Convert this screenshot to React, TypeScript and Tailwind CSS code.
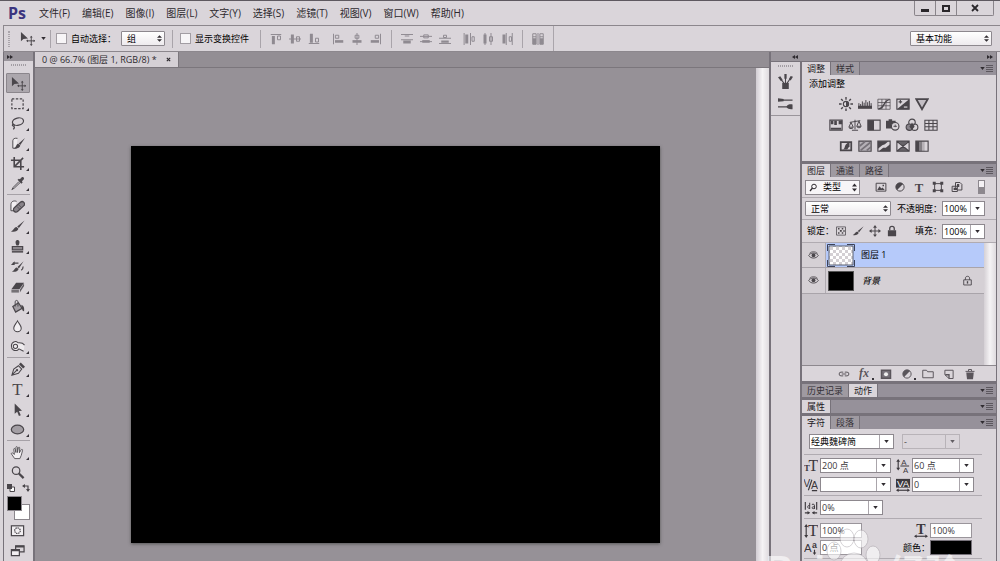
import type { ReactNode } from 'react'
import clsx from 'clsx'

interface GlyphProps {
  children:   ReactNode
  className?: string
}

// 16x16 drawing, stroked with the current colour
function Glyph({ children, className }: GlyphProps) {
  return (
    <svg
      viewBox="0 0 16 16"
      fill="none"
      stroke="currentColor"
      strokeWidth="1.3"
      aria-hidden="true"
      className={clsx('shrink-0', className ?? 'size-[15px]')}
    >
      {children}
    </svg>
  )
}

const solid = { fill: 'currentColor', stroke: 'none' }
const letter = { ...solid, fontFamily: 'Liberation Serif', fontWeight: 700 }

const glyphs = {
  move: (
    <>
      <path {...solid} d="M1 1v10l2.6-2.4L8.5 8z" />
      <path d="M12 6v9M7.5 10.500h9" strokeWidth="1" />
      <path {...solid} d="M12 5l1.500 2h-3zM12 16l1.500-2h-3zM6.500 10.500l2-1.500v3zM16 10.500l-1.500-1.500v3z" />
    </>
  ),
  marquee: <rect x="2" y="3" width="12" height="10.500" strokeDasharray="2.600 1.600" />,
  lasso: (
    <>
      <ellipse cx="8.500" cy="6" rx="6" ry="3.900" transform="rotate(-12 8.500 6)" />
      <path d="M3.500 8.500c-1 .5-1.500 2 0 2.200 1.500 0 1.500-1.500.3-1.900M4 10.800c1 1 .5 2.500-.5 3.500" />
    </>
  ),
  quickSelect: (
    <>
      <path d="M8 2.500C5 2 3 3 3 5v8h4" strokeWidth="1" fill="#eeebee" />
      <path {...solid} d="M16 2L11 9.500 9.200 8zM8.800 8.200l2.200 2c-.5 2.800-3.500 3.500-7 3 2.800-.9 2.300-4.400 4.800-5z" />
    </>
  ),
  crop: <path d="M4.500 1v10.500H15M1 4.500h10.500V15M5 11L14 2" strokeWidth="1.700" />,
  dropper: (
    <>
      <path {...solid} d="M8 4l1.500-1.200 1 .7L12.300 1.500c1.700-1 3.500.6 2.300 2.300L12.700 5.700 13.500 7 12 8.200z" />
      <path d="M9.500 6L3.500 12 2 14.500 4.500 13 10.800 7" strokeWidth="1" />
    </>
  ),
  heal: (
    <>
      <path d="M5 12.500H1V6c0-3.500 3-4.500 6-3.500" strokeWidth="1" fill="#f2eff2" />
      <rect x="2.500" y="5.800" width="14" height="5.200" rx="2.600" transform="rotate(-42 9.500 8.300)" fill="#888389" />
      <path d="M7.500 8l3 3M9.300 6.300l3 3" strokeWidth=".8" />
    </>
  ),
  brush: <path {...solid} d="M15.500 1.500L9.500 9.500 7.700 8zM7 8.600l2 1.800c-.8 3-4.500 3.600-8 2.900 2.800-.8 2.800-4 6-4.700z" />,
  stamp: (
    <>
      <path {...solid} d="M7 7C5 3.500 6 1 8 1s3 2.500 1 6z" />
      <path d="M2.500 8h11v3.500h-11z" fill="#8b868c" />
      <path d="M2 13.700h12" strokeWidth="1.600" />
    </>
  ),
  history: (
    <>
      <path {...solid} d="M14.500 2.500L9.500 10 8 8.600zM7.300 9l1.900 1.700C8.300 13.500 5 14 2 13.500c2.500-.8 2.500-3.800 5.300-4.500z" />
      <path d="M3 4.500h6M12 12c1.500-1 2-2 2-4" />
      <path {...solid} d="M1 6.500l4-4v4z" />
    </>
  ),
  eraser: (
    <>
      <path {...solid} d="M6.500 4h8.500l-5 7H1.500z" />
      <path {...solid} d="M1.500 11.500H9.500v3h-8z" opacity=".7" />
      <path {...solid} d="M10.500 11.500l4.500-7v3l-4.500 7z" opacity=".85" />
    </>
  ),
  bucket: (
    <>
      <path d="M3 8l6-4 4 6-7 4z" fill="#a29da3" />
      <path d="M5.500 8V3c0-2 3-2 3 0v5" strokeWidth="1" />
      <path {...solid} d="M12 6c3 1 3.500 4 3 7-2 0-2-2-2.500-4z" />
    </>
  ),
  drop: <path d="M8 2c1.500 3 4 5 4 7.700a4 4 0 0 1-8 0C4 7 6.500 5 8 2z" fill="#f2eff2" strokeWidth="1.100" />,
  dodge: (
    <>
      <path d="M15.500 6.500C13 3 9 4.500 8.500 4 6 1.500 1.500 3 1.500 7.500S5 13 8 12l1.500-1.500 5 2.500" strokeWidth="1.100" fill="#eeebee" />
      <circle cx="5.800" cy="7.800" r="2.300" strokeWidth="1.100" />
    </>
  ),
  pen: (
    <>
      <path d="M2 14l2-6.500L9 4l3.500 3.500L9 12zM2 14l5-5" strokeWidth="1.100" />
      <circle {...solid} cx="7.500" cy="8.700" r="1.200" />
      <path {...solid} d="M9.500 2.500L11.500 .5 16 5 14 7z" />
    </>
  ),
  type: <text {...letter} x="8" y="14" fontSize="18" textAnchor="middle" fontWeight="400">T</text>,
  arrow: <path {...solid} d="M5 1.500v11l2.700-2.200L9.500 15l2-.8-2-4.500 3.300-.3z" />,
  ellipse: <ellipse cx="8" cy="8" rx="6.600" ry="4.700" fill="#a39ea4" />,
  hand: (
    <path
      d="M5 14.500L1.500 9.500c-.3-1 .8-1.500 1.500-.8L4.700 10 4 4.500c0-1 1.300-1.100 1.500 0L6.300 8V2.500c0-1 1.500-1 1.600 0V8l1-5c.2-1 1.600-.8 1.500.2L10 8.300l2-3.300c.7-.8 1.700-.2 1.400.7L12 11l-1.500 3.500z"
      fill="#f2eff2"
      strokeWidth=".9"
    />
  ),
  zoom: (
    <>
      <circle cx="6.500" cy="6" r="4" />
      <path d="M9.500 9l5 5" strokeWidth="2.400" />
    </>
  ),
  mask: (
    <>
      <rect x="1.500" y="3" width="13" height="10.500" fill="#f2eff2" />
      <circle cx="8" cy="8.200" r="3" strokeDasharray="1.500 .8" />
    </>
  ),
  screen: (
    <>
      <path d="M6 3h9v6.500H6z" />
      <path d="M6 3.800h9" strokeWidth="2" />
      <path d="M1.500 7H10v6.500H1.500z" fill="#f2eff2" />
      <path d="M1.500 7.800H10" strokeWidth="2" />
    </>
  ),
  brushes: (
    <>
      <path {...solid} d="M4.500 9.500h7V16h-7z" />
      <path d="M8 10V3M6.500 10L3 5.500M9.500 10L13 5" strokeWidth="1.100" />
      <path {...solid} d="M6.800 0h2.400v5H6.800zM0 3.500l2.500-1 2.500 4-2 1zM11.500 5.500L13.500 2l2.500 1-2.500 4z" />
    </>
  ),
  brushPresets: (
    <>
      <path d="M1 4.500h14.500M0 11.500h12" />
      <path {...solid} d="M0 2.500l6 .8v2.400L0 6zM9 11.500c1-3 5-3 6.500-2.500v5c-2 .5-5.500 0-6.500-2.500z" />
    </>
  ),
  sun: (
    <>
      <circle cx="8" cy="8" r="3" />
      <path {...solid} d="M8 5a3 3 0 0 1 0 6z" />
      <path d="M8 0v3M8 13v3M0 8h3M13 8h3M2.400 2.400l2 2M11.600 11.600l2 2M2.400 13.600l2-2M11.600 4.400l2-2" strokeWidth="1.600" />
    </>
  ),
  levels: (
    <>
      <path {...solid} d="M0 10h16v3.500H0z" />
      <path d="M1 7v4M3 8v3M5 5v6M7 6.500v5M9 3.500v8M11 6v5M13 4.500v7M15 7v4" strokeWidth="1.100" />
    </>
  ),
  curves: (
    <>
      <path d="M1 2.500h14v11.500H1zM5.600 2.500V14M10.300 2.500V14M1 6.300h14M1 10h14" strokeWidth=".8" />
      <path d="M1.500 13.500c8 0 5-10 13-10.500" strokeWidth="1.600" />
    </>
  ),
  exposure: (
    <>
      <path d="M1 2.500h14v11.500H1z" />
      <path {...solid} d="M15 2.500V14H1z" />
      <path d="M3 5.500h4M5 3.500v4" />
      <path d="M9 11.500h4" stroke="#e5e1e5" />
    </>
  ),
  vibrance: <path d="M1.500 2.500h13L8 14z" fill="#c3bec4" strokeWidth="2" />,
  hue: (
    <>
      <path d="M1 2.500h14v11.500H1z" />
      <path {...solid} d="M2 3h3v4H2zM6 3h3v5H6zM11 3h4v4h-4zM2 11h12v2.500H2z" />
    </>
  ),
  balance: (
    <path d="M8 2v11M4.500 14h7M2 5l12-2M3.500 5L1 10.500h5zM12.500 3.500L10 9.500h5zM1 11c1 1.500 4 1.500 5 0M10 10c1 1.500 4 1.500 5 0" strokeWidth="1.100" />
  ),
  blackWhite: (
    <>
      <path d="M1 2.500h14v11.500H1z" />
      <path {...solid} d="M1 2.500h7V14H1z" />
    </>
  ),
  photo: (
    <>
      <path {...solid} d="M0 3h3V1.500h4V3h4v5L7 12H0z" />
      <circle cx="10.500" cy="9.500" r="4.300" fill="#dad5da" />
      <path d="M8.500 9.500h4M10.500 7.500v3" strokeWidth="1" />
    </>
  ),
  mixer: (
    <>
      <circle cx="8" cy="5" r="3.700" />
      <circle cx="5" cy="10.500" r="3.700" fill="#88838a" />
      <circle cx="11" cy="10.500" r="3.700" />
      <path {...solid} d="M8 5l3 5-3 3-3-3z" />
    </>
  ),
  grid: <path d="M1 2.500h14v11.500H1zM5.600 2.500V14M10.300 2.500V14M1 6.300h14M1 10h14" strokeWidth="1.200" />,
  invert: (
    <>
      <path d="M2 3.500h12V13H2z" strokeWidth="2" />
      <path {...solid} d="M4 12c4 0 1-7 8-8v5c-2 0-1 3-4 3z" />
    </>
  ),
  posterize: (
    <>
      <path d="M1 2.500h14v11.500H1z" fill="#b5b0b6" />
      <path d="M2 8l6-5M3 13L14 4M10 13l5-4" strokeWidth="2" stroke="#767178" />
    </>
  ),
  threshold: (
    <>
      <path d="M1 2.500h14v11.500H1z" />
      <path {...solid} d="M1 2.500h12L9 6 6 7l-5 4zM15 6v8H2l5-4h3z" />
    </>
  ),
  selective: (
    <>
      <path d="M1 2.500h14v11.500H1zM1 2.500L15 14M15 2.500L1 14" />
      <path {...solid} d="M1 14l7-6 7 6zM2 2.500h12L8 8z" opacity=".8" />
    </>
  ),
  gradient: (
    <>
      <path d="M1 2.500h14v11.500H1z" />
      <path {...solid} d="M1 2.500h4V14H1z" />
      <path {...solid} d="M5 2.500h3V14H5z" opacity=".6" />
      <path {...solid} d="M8 2.500h3V14H8z" opacity=".25" />
    </>
  ),
  image: (
    <>
      <path d="M1.500 3h13v10.500h-13z" />
      <path {...solid} d="M3 12l3-5 2.500 3L10 8.500l3 3.500zM10 5h2v2h-2z" />
    </>
  ),
  halfCircle: (
    <>
      <circle cx="8" cy="8" r="5.500" />
      <path {...solid} d="M12 4.100A5.500 5.500 0 1 0 4.100 12z" />
    </>
  ),
  boldType: <text {...letter} x="8" y="14" fontSize="17" textAnchor="middle">T</text>,
  shape: (
    <>
      <path d="M3.500 3.500h9v9h-9z" />
      <path {...solid} d="M1 1h4v4H1zM11 1h4v4h-4zM1 11h4v4H1zM11 11h4v4h-4z" />
    </>
  ),
  smart: (
    <>
      <path d="M6 9V2h6l2.500 2.500V12H9" />
      <path d="M1.500 7h7v7h-7z" />
      <path {...solid} d="M8 4h3v4H8zM3.500 9H8v3H3.500z" />
    </>
  ),
  checker: (
    <>
      <path d="M2 2.500h12v11H2z" strokeWidth="1" />
      <path {...solid} d="M4 4h2v2H4zM9 4h2v2H9zM6.500 6.500h2.500v2.500H6.500zM11 7h2v2h-2zM4 9.500h2v2H4zM9 9.500h2v2H9z" />
    </>
  ),
  cross: (
    <>
      <path d="M8 2v12M2 8h12" />
      <path {...solid} d="M8 0l2.600 3.500H5.400zM8 16l2.600-3.500H5.400zM0 8l3.500-2.600v5.200zM16 8l-3.500-2.600v5.200z" />
    </>
  ),
  lock: (
    <>
      <path d="M5 7V4.500c0-3.500 6-3.500 6 0V7" strokeWidth="1.700" />
      <path {...solid} d="M2.500 7h11v8h-11z" />
    </>
  ),
  lockOutline: (
    <>
      <path d="M5 7V4.500c0-3.500 6-3.500 6 0V7M2.500 7h11v7.500h-11z" />
      <path d="M8 9v3.500" strokeWidth="2" />
    </>
  ),
  eye: (
    <>
      <path d="M1 8c3-5 11-5 14 0-3 5-11 5-14 0z" />
      <circle {...solid} cx="8" cy="7.700" r="2.800" />
      <path d="M2 5c3-3.500 9-3.500 12 0" strokeWidth="1" />
    </>
  ),
  link: <path d="M7 5.500H4a2.500 2.500 0 0 0 0 5h3M9 5.500h3a2.500 2.500 0 0 1 0 5H9M5 8h6" />,
  fx: <text {...solid} x="0" y="12" fontSize="16" fontFamily="Liberation Serif" fontStyle="italic" fontWeight="700">fx</text>,
  layerMask: (
    <>
      <path d="M2 3h12v10.500H2z" strokeWidth="2" fill="#77727a" />
      <circle cx="8" cy="8.200" r="2.700" fill="#eee" stroke="none" />
    </>
  ),
  folder: <path d="M1 13V3h5l1.500 2H15v8z" />,
  newLayer: (
    <>
      <path d="M2.500 3h11v11H8L2.500 9z" />
      <path d="M3 9h5v5" strokeWidth="1.800" />
    </>
  ),
  trash: (
    <>
      <path d="M2 4.500h12M6 4V2h4v2" />
      <path {...solid} d="M3 6h10l-1 9H4z" />
    </>
  ),
  alignTop: (
    <>
      <path d="M1 2h14M10 4h4v5h-4z" />
      <path {...solid} d="M2.500 4h4v11h-4z" />
    </>
  ),
  alignMiddle: (
    <>
      <path d="M0 8h16M10 5h4v6h-4z" />
      <path {...solid} d="M2.500 2h4v12h-4z" />
    </>
  ),
  alignBottom: (
    <>
      <path d="M1 14h14M10 7h4v5h-4z" />
      <path {...solid} d="M2.500 1h4v12h-4z" />
    </>
  ),
  alignLeft: (
    <>
      <path d="M2 1v14M4.500 3H9v4H4.500z" />
      <path {...solid} d="M4 9.500h11V13H4z" />
    </>
  ),
  alignCenter: (
    <>
      <path d="M8 0v16M5.500 3h5v4h-5z" />
      <path {...solid} d="M2 9.500h12V13H2z" />
    </>
  ),
  alignRight: (
    <>
      <path d="M14 1v14M7 3h4.500v4H7z" />
      <path {...solid} d="M1 9.500h11V13H1z" />
    </>
  ),
  distTop: (
    <>
      <path d="M0 2h16M0 9h16M5 4h6" />
      <path {...solid} d="M3 10h10v4H3z" />
    </>
  ),
  distMiddle: (
    <>
      <path d="M0 4.500h16M0 11.500h16M5 2.500h6v4H5z" />
      <path {...solid} d="M3 9.500h10V13H3z" />
    </>
  ),
  distBottom: (
    <>
      <path d="M0 7h16M0 14h16M6 3h4v3H6z" />
      <path {...solid} d="M3 10h10v3H3z" />
    </>
  ),
  distLeft: (
    <>
      <path d="M1.500 0v16M10 0v16M12 5h3v6h-3z" />
      <path {...solid} d="M3 2h4v12H3z" />
    </>
  ),
  distCenter: (
    <>
      <path d="M4 0v16M12 0v16M10 5h4v6h-4z" />
      <path {...solid} d="M2 2h4v12H2z" />
    </>
  ),
  distRight: (
    <>
      <path d="M7 0v16M15 0v16M11 5h3v6h-3z" />
      <path {...solid} d="M2 2h4v12H2z" />
    </>
  ),
  autoAlign: (
    <>
      <path d="M1 1h4.500v14H1zM10.500 1H15v14h-4.500zM8 0v16M1 5h4.500M10.500 5H15" />
      <path {...solid} d="M1 7h4.500v8H1zM10.500 7H15v8h-4.500z" />
    </>
  ),
  fontSize: (
    <>
      <text {...letter} x="5" y="14" fontSize="18" fontWeight="400">T</text>
      <text {...letter} x="0" y="14" fontSize="10">T</text>
    </>
  ),
  leading: (
    <>
      <text {...solid} x="6" y="7" fontSize="9" fontFamily="Liberation Sans">A</text>
      <text {...solid} x="8" y="16" fontSize="9" fontFamily="Liberation Sans">A</text>
      <path d="M5 8h10M2.500 2v9" />
      <path {...solid} d="M2.500 0l2.200 3H.3zM2.500 13l2.200-3H.3z" />
    </>
  ),
  kerning: (
    <>
      <text {...solid} x="-1" y="10" fontSize="12" fontFamily="Liberation Sans">V</text>
      <text {...solid} x="8" y="12" fontSize="12" fontFamily="Liberation Sans">A</text>
      <path d="M9 2L5 14M9 14.500h6" />
    </>
  ),
  tracking: (
    <>
      <path {...solid} d="M0 1h16v10H0z" />
      <text x="8" y="10" fontSize="11" fontFamily="Liberation Sans" fill="#fff" stroke="none" textAnchor="middle">VA</text>
      <path d="M2 14h12" />
      <path {...solid} d="M0 14l3-2v4zM16 14l-3-2v4z" />
    </>
  ),
  tsume: (
    <>
      <path d="M1.500 1v9M14.500 1v9M1 13.500h5M10 13.500h5" />
      <path d="M6.500 2v7M6.500 5.500c-3-1.500-3 3.500 0 3M9 4c2-1 3 0 3 1.500V9M12 6.500c-4 0-3.500 3 0 2" strokeWidth="1.100" />
      <path {...solid} d="M7 13.500l-3-2v4zM9 13.500l3-2v4z" />
    </>
  ),
  vScale: (
    <>
      <text {...letter} x="4.500" y="14" fontSize="19" fontWeight="400">T</text>
      <path d="M2.500 3v10" />
      <path {...solid} d="M2.500 0l2.200 3.500H.3zM2.500 16l2.200-3.500H.3z" />
    </>
  ),
  hScale: (
    <>
      <text {...letter} x="8" y="11" fontSize="16" textAnchor="middle">T</text>
      <path d="M2 14h12" />
      <path {...solid} d="M0 14l3-2v4zM16 14l-3-2v4z" />
    </>
  ),
  baseline: (
    <>
      <text {...solid} x="0" y="12" fontSize="13" fontFamily="Liberation Sans">A</text>
      <text {...solid} x="9" y="8" fontSize="10" fontFamily="Liberation Sans" fontWeight="700">a</text>
      <path d="M12 10v5" />
      <path {...solid} d="M12 16l2-3h-4z" />
    </>
  ),
}

type GlyphName = keyof typeof glyphs

const menus = ['文件(F)', '编辑(E)', '图像(I)', '图层(L)', '文字(Y)', '选择(S)', '滤镜(T)', '视图(V)', '窗口(W)', '帮助(H)']

const alignGroups: GlyphName[][] = [
  ['alignTop', 'alignMiddle', 'alignBottom'],
  ['alignLeft', 'alignCenter', 'alignRight'],
]

const distributeGroups: GlyphName[][] = [
  ['distTop', 'distMiddle', 'distBottom'],
  ['distLeft', 'distCenter', 'distRight'],
]

const toolGroups: GlyphName[][] = [
  ['move', 'marquee', 'lasso', 'quickSelect', 'crop', 'dropper'],
  ['heal', 'brush', 'stamp', 'history', 'eraser', 'bucket', 'drop', 'dodge'],
  ['pen', 'type', 'arrow', 'ellipse'],
  ['hand', 'zoom'],
]

const adjustments: GlyphName[][] = [
  ['sun', 'levels', 'curves', 'exposure', 'vibrance'],
  ['hue', 'balance', 'blackWhite', 'photo', 'mixer', 'grid'],
  ['invert', 'posterize', 'threshold', 'selective', 'gradient'],
]

function IconButton({ name, className }: { name: GlyphName; className?: string }) {
  return (
    <button type="button" aria-label={name} className="flex shrink-0 items-center justify-center">
      <Glyph className={className}>{glyphs[name]}</Glyph>
    </button>
  )
}

function Separator() {
  return <div className="h-[18px] w-px shrink-0 bg-[#a9a4aa]" />
}

function Caret() {
  return (
    <svg viewBox="0 0 6 4" className="h-[3px] w-[5px]" aria-hidden="true">
      <path d="M0 0h6L3 4z" fill="#302c31" />
    </svg>
  )
}

interface DropdownProps {
  label:      string
  value:      string
  className?: string
}

function Dropdown({ label, value, className }: DropdownProps) {
  return (
    <div className={clsx('relative h-[15px]', className)}>
      <select
        aria-label={label}
        className="block h-full w-full appearance-none rounded-[1px] border border-[#8d888e] bg-linear-to-b from-white to-[#eeebee] pl-[5px] text-[9px] leading-[12px] text-black"
      >
        <option>{value}</option>
      </select>
      <svg viewBox="0 0 6 8" className="pointer-events-none absolute inset-y-0 right-[3px] my-auto h-[7px] w-[5px]" aria-hidden="true">
        <path d="M0 3h6L3 0zM0 5h6L3 8z" fill="#302c31" />
      </svg>
    </div>
  )
}

interface ComboProps {
  label:      string
  value:      string
  className?: string
  disabled?:  boolean
}

function Combo({ label, value, className, disabled = false }: ComboProps) {
  return (
    <div className={clsx('flex h-[15px] border', disabled ? 'border-[#aaa5ab] opacity-70' : 'border-[#8d888e] bg-white', className)}>
      <input
        aria-label={label}
        defaultValue={value}
        disabled={disabled}
        className="w-0 min-w-0 flex-1 pl-px text-[9px] leading-[13px]"
      />
      <button
        type="button"
        aria-label={`${label} ▾`}
        disabled={disabled}
        className="flex w-[14px] items-center justify-center border-l border-[#aaa5ab]"
      >
        <Caret />
      </button>
    </div>
  )
}

function TextBox({ label, value }: { label: string; value: string }) {
  return (
    <input
      aria-label={label}
      defaultValue={value}
      className="h-[15px] w-[42px] border border-[#9a959b] bg-white pl-px text-[9px] leading-[13px]"
    />
  )
}

function TabBar({ tabs, active }: { tabs: string[]; active: string }) {
  return (
    <div className="flex h-[14px] shrink-0 border-t border-[#77727a] bg-[#96919a]">
      {tabs.map((tab) => (
        <button
          key={tab}
          type="button"
          className={clsx(
            'border-r border-[#77727a] px-[5px] text-[9px] leading-[13px]',
            tab === active ? 'bg-[#dad5da] text-[#1d1a1e]' : 'bg-[#9f9aa1] text-[#343036]'
          )}
        >
          {tab}
        </button>
      ))}
      <button type="button" aria-label="menu" className="ml-auto flex items-center gap-px pr-[3px]">
        <Caret />
        <svg viewBox="0 0 7 7" className="size-[7px]" aria-hidden="true">
          <path d="M0 .5h7M0 2.500h7M0 4.500h7M0 6.500h7" stroke="#5d585f" />
        </svg>
      </button>
    </div>
  )
}

function DoubleArrow({ left = false }: { left?: boolean }) {
  return (
    <svg viewBox="0 0 6 4" className={clsx('h-[4px] w-[6px]', left && 'rotate-180')} aria-hidden="true">
      <path d="M0 0l3 2-3 2zM3 0l3 2-3 2z" fill="#2e2a2f" />
    </svg>
  )
}

function Grip() {
  return <div className="mx-auto h-[2px] w-[15px] border-y border-dotted border-[#a29da3]" />
}

function MenuBar() {
  return (
    <header className="flex h-[25px] shrink-0 items-center border-t border-[#5e5960] pr-[6px] pl-[8px]">
      <span className="w-[31px] font-['Open_Sans'] text-[16px] leading-[20px] font-bold text-[#3b347f]">Ps</span>
      <nav className="flex gap-[12px]">
        {menus.map((menu) => (
          <button key={menu} type="button" className="text-[10px] leading-[16px] whitespace-nowrap">
            {menu}
          </button>
        ))}
      </nav>
      <div className="ml-auto flex h-[15px] self-start rounded-b-[2px] border border-t-0 border-[#89848a]">
        <button type="button" aria-label="minimize" className="flex w-[21px] items-center justify-center border-r border-[#89848a]">
          <span className="mt-1 h-[3px] w-[8px] bg-[#2a272b]" />
        </button>
        <button type="button" aria-label="maximize" className="flex w-[21px] items-center justify-center border-r border-[#89848a]">
          <span className="h-[7px] w-[8px] border-2 border-[#2a272b]" />
        </button>
        <button type="button" aria-label="close" className="flex w-[36px] items-center justify-center">
          <svg viewBox="0 0 8 8" className="size-[8px]" aria-hidden="true">
            <path d="M1 1l6 6M7 1L1 7" stroke="#2a272b" strokeWidth="1.800" />
          </svg>
        </button>
      </div>
    </header>
  )
}

function CheckOption({ children }: { children: ReactNode }) {
  return (
    <label className="flex items-center gap-[4px] text-[9px] leading-[14px] whitespace-nowrap text-black">
      <input type="checkbox" className="size-[11px] appearance-none border border-[#a29da3] bg-[#f7f5f7]" />
      {children}
    </label>
  )
}

function AlignGroup({ names }: { names: GlyphName[] }) {
  return (
    <div className="flex gap-[7px] text-[#8f8a91]">
      {names.map((name) => (
        <IconButton key={name} name={name} className="size-[12px]" />
      ))}
    </div>
  )
}

function OptionsBar() {
  return (
    <div className="ml-[3px] flex h-[27px] shrink-0 items-center border-y border-l border-[#8c878d] pr-[8px] pl-[4px]">
      <div className="h-[16px] w-[2px] border-x border-dotted border-[#a9a4aa]" />
      <button type="button" aria-label="tool preset" className="ml-[10px] flex items-center gap-[6px] text-[#4a464b]">
        <Glyph>{glyphs.move}</Glyph>
        <Caret />
      </button>
      <div className="ml-[4px] flex flex-1 items-center">
        <Separator />
        <div className="ml-[5px]">
          <CheckOption>自动选择：</CheckOption>
        </div>
        <Dropdown label="自动选择" value="组" className="ml-[5px] w-[44px]" />
        <div className="ml-[7px] flex items-center gap-[7px]">
          <Separator />
          <CheckOption>显示变换控件</CheckOption>
        </div>
        <div className="ml-[11px] flex items-center gap-[9px]">
          <Separator />
          <div className="flex gap-[12px]">
            {alignGroups.map((names) => (
              <AlignGroup key={names[0]} names={names} />
            ))}
          </div>
          <Separator />
          <div className="flex gap-[12px]">
            {distributeGroups.map((names) => (
              <AlignGroup key={names[0]} names={names} />
            ))}
          </div>
          <Separator />
          <AlignGroup names={['autoAlign']} />
        </div>
        <div className="ml-[9px] h-[25px] w-px bg-[#aaa5ab]" />
        <Dropdown label="工作区" value="基本功能" className="ml-auto w-[82px]" />
      </div>
    </div>
  )
}

function Toolbar() {
  return (
    <aside className="ml-[3px] flex w-[32px] shrink-0 flex-col border-r-2 border-l border-[#77727a]">
      <div className="flex h-[9px] shrink-0 items-center bg-[#99949b] pl-[3px]">
        <DoubleArrow />
      </div>
      <div className="pt-[3px] pb-[7px]">
        <Grip />
      </div>
      {toolGroups.map((group, i) => (
        <div key={group[0]}>
          {i > 0 && <div className="mx-[3px] my-px h-px bg-[#a6a1a7]" />}
          {group.map((name) => (
            <button
              key={name}
              type="button"
              aria-label={name}
              className={clsx(
                'relative flex h-[20px] w-[24px] items-center justify-center rounded-[1px] text-[#4a464b]',
                name === 'move' ? 'ml-[2px] border border-[#8b868c] bg-[#aca7ad]' : 'ml-[1px]'
              )}
            >
              <Glyph>{glyphs[name]}</Glyph>
              {name !== 'move' && name !== 'zoom' && (
                <svg viewBox="0 0 3 3" className="absolute right-0 bottom-[2px] size-[3px]" aria-hidden="true">
                  <path d="M3 0v3H0z" fill="#38343a" />
                </svg>
              )}
            </button>
          ))}
        </div>
      ))}
      <div className="mt-[2px] flex justify-between px-[3px] text-[#4a464b]">
        <svg viewBox="0 0 8 8" className="size-[8px]" aria-hidden="true">
          <path d="M3 3h4.500v4.500H3z" fill="#fff" stroke="currentColor" />
          <path d="M0 0h5v5H0z" fill="currentColor" />
        </svg>
        <svg viewBox="0 0 8 8" className="size-[8px]" aria-hidden="true">
          <path d="M1 2h5v5" fill="none" stroke="currentColor" strokeWidth="1.200" />
          <path d="M0 2l3-2v4zM6 8L4 5h4z" fill="currentColor" />
        </svg>
      </div>
      {/* foreground over background colour */}
      <div className="relative mx-[3px] mt-[4px] h-[24px] shrink-0">
        <button type="button" aria-label="background colour" className="absolute right-0 bottom-0 size-[16px] border border-[#8b868c] bg-white" />
        <button type="button" aria-label="foreground colour" className="absolute top-0 left-0 size-[15px] border border-[#8b868c] bg-black" />
      </div>
      <div className="mt-[3px] flex flex-col items-center gap-[5px] pr-[2px] text-[#4a464b]">
        <IconButton name="mask" />
        <IconButton name="screen" />
      </div>
    </aside>
  )
}

function Workspace() {
  return (
    <main className="flex min-w-0 flex-1 flex-col bg-[#969197]">
      <div className="flex h-[16px] shrink-0 border-b border-[#7b767c] bg-[#938e94]">
        <div className="flex items-center gap-[9px] border-r border-[#7b767c] bg-[#d5d0d5] px-[7px] text-[9px] leading-[15px] whitespace-nowrap text-[#2d292e]">
          0 @ 66.7% (图层 1, RGB/8) *
          <button type="button" aria-label="close tab">
            <svg viewBox="0 0 6 6" className="size-[5px]" aria-hidden="true">
              <path d="M1 1l4 4M5 1L1 5" stroke="#2d292e" strokeWidth="1.400" />
            </svg>
          </button>
        </div>
      </div>
      <div className="flex min-h-0 flex-1">
        <div className="min-w-0 flex-1 pt-[78px]">
          <div className="mx-auto aspect-[4/3] w-11/15 bg-black shadow-[0_1px_3px_#555]" />
        </div>
        <div className="w-[13px] shrink-0 bg-linear-to-r from-[#d2cdd3] via-[#f5f3f5] to-[#dfdbdf]" />
      </div>
    </main>
  )
}

function AdjustmentsPanel() {
  return (
    <section className="shrink-0">
      <TabBar tabs={['调整', '样式']} active="调整" />
      <div className="flex h-[86px] flex-col">
        <h2 className="px-[7px] pt-px text-[9px] leading-[16px] text-black">添加调整</h2>
        <div className="flex flex-col gap-[7px] pt-[5px] pr-[31px] text-[#4a464b]">
          {adjustments.map((row) => (
            <div key={row[0]} className="flex justify-center gap-[5px]">
              {row.map((name) => (
                <IconButton key={name} name={name} className="size-[14px]" />
              ))}
            </div>
          ))}
        </div>
      </div>
    </section>
  )
}

function LayersPanel() {
  return (
    <section className="flex shrink-0 flex-col border-t-2 border-[#77727a]">
      <TabBar tabs={['图层', '通道', '路径']} active="图层" />
      <div className="flex h-[21px] items-center border-b border-[#b0abb1] pr-[11px] pl-[3px]">
        <div className="relative">
          <select
            aria-label="类型"
            className="block h-[15px] w-[55px] appearance-none border border-[#8d888e] bg-[#f7f5f7] pl-[17px] text-[9px] leading-[12px] text-black"
          >
            <option>类型</option>
          </select>
          <svg viewBox="0 0 55 15" className="pointer-events-none absolute inset-0 h-[15px] w-[55px]" aria-hidden="true">
            <path d="M47 6.500h5l-2.500-3zM47 8.500h5l-2.500 3z" fill="#302c31" />
            <circle cx="9" cy="6.500" r="2.300" fill="none" stroke="#302c31" />
            <path d="M7.500 8L5 11" stroke="#302c31" strokeWidth="1.300" />
          </svg>
        </div>
        <div className="ml-[15px] flex gap-[7px] text-[#4a464b]">
          {(['image', 'halfCircle', 'boldType', 'shape', 'smart'] as GlyphName[]).map((name) => (
            <IconButton key={name} name={name} className="size-[12px]" />
          ))}
        </div>
        <button type="button" aria-label="filter" className="ml-auto h-[14px] w-[7px] border border-[#8d888e] bg-linear-to-b from-[#f4f1f4] from-50% to-[#8d888e] to-50%" />
      </div>
      <div className="flex h-[22px] items-center border-b border-[#b0abb1] pr-[11px] pl-[3px] text-[9px] leading-[14px] text-black">
        <Dropdown label="混合模式" value="正常" className="w-[86px]" />
        <span className="ml-auto whitespace-nowrap">不透明度：</span>
        <Combo label="不透明度" value="100%" className="w-[43px]" />
      </div>
      <div className="flex h-[23px] items-center border-b border-[#b0abb1] pr-[11px] pl-[5px] text-[9px] leading-[14px] text-black">
        锁定：
        <div className="ml-px flex gap-[5px] text-[#4a464b]">
          {(['checker', 'brush', 'cross', 'lock'] as GlyphName[]).map((name) => (
            <IconButton key={name} name={name} className="size-[12px]" />
          ))}
        </div>
        <span className="ml-auto whitespace-nowrap">填充：</span>
        <Combo label="填充" value="100%" className="w-[43px]" />
      </div>
      <div className="flex h-[122px] bg-[#c8c3c9]">
        <ul className="min-w-0 flex-1 text-[9px] text-black">
          <li className="flex h-[25px] items-center border-b border-[#a9a4aa] bg-[#b6cafa]">
            <span className="flex h-full w-[24px] items-center justify-center border-r border-[#b0abb1] bg-[#d5d0d5] text-[#4a464b]">
              <IconButton name="eye" className="size-[11px]" />
            </span>
            <svg viewBox="0 0 28 23" className="ml-px h-[23px] w-[28px]" aria-hidden="true">
              <defs>
                <pattern id="checks" width="6" height="6" patternUnits="userSpaceOnUse">
                  <path d="M0 0h6v6H0z" fill="#fff" />
                  <path d="M0 0h3v3H0zM3 3h3v3H3z" fill="#d3cfd3" />
                </pattern>
              </defs>
              <path d="M2 2h24v19H2z" fill="url(#checks)" stroke="#5b6070" />
              <path d="M8 .5H.5V7M20 .5h7.500V7M.5 16v6.500H8M27.500 16v6.500H20" fill="none" stroke="#3b4258" />
            </svg>
            <span className="ml-[6px]">图层 1</span>
          </li>
          <li className="flex h-[26px] items-center border-b border-[#a9a4aa] bg-[#d5d0d5]">
            <span className="flex h-full w-[24px] items-center justify-center border-r border-[#b0abb1] text-[#4a464b]">
              <IconButton name="eye" className="size-[11px]" />
            </span>
            <span className="ml-[2px] h-[20px] w-[26px] border border-[#555] bg-black" />
            <span className="ml-[8px] italic">背景</span>
            <Glyph className="mr-[11px] ml-auto size-[11px] text-[#4a464b]">{glyphs.lockOutline}</Glyph>
          </li>
        </ul>
        <div className="w-[12px] shrink-0 bg-linear-to-r from-[#d5d0d5] via-[#f5f3f5] to-[#dfdbdf]" />
      </div>
      <div className="flex h-[16px] items-center gap-[9px] border-t border-[#8d888e] pl-[36px] text-[#5a555b]">
        {(['link', 'fx', 'layerMask', 'halfCircle', 'folder', 'newLayer', 'trash'] as GlyphName[]).map((name) => (
          <div key={name} className="relative">
            <IconButton name={name} className="size-[12px]" />
            {(name === 'fx' || name === 'halfCircle') && (
              <span className="absolute -right-[3px] bottom-0 size-[2px] bg-[#38343a]" />
            )}
          </div>
        ))}
      </div>
    </section>
  )
}

interface FieldProps {
  icon:       GlyphName
  children:   ReactNode
  className?: string
}

function Field({ icon, children, className }: FieldProps) {
  return (
    <div className={clsx('flex items-center gap-[2px] text-[#3c383d]', className)}>
      <Glyph className="size-[14px]">{glyphs[icon]}</Glyph>
      {children}
    </div>
  )
}

function CharacterPanel() {
  return (
    <section className="border-t-2 border-[#77727a] text-[9px] leading-[13px] text-black">
      <TabBar tabs={['字符', '段落']} active="字符" />
      <div className="flex gap-[8px] px-[7px] py-[5px]">
        <Combo label="字体" value="经典魏碑简" className="w-[85px]" />
        <Combo label="字体样式" value="-" className="w-[58px]" disabled />
      </div>
      <div className="mr-[14px] ml-[2px]">
        <div className="grid grid-cols-[92px_auto] justify-start gap-y-[4px] border-t border-[#b0abb1] py-[3px]">
          <Field icon="fontSize"><Combo label="字体大小" value="200 点" className="w-[71px]" /></Field>
          <Field icon="leading"><Combo label="行距" value="60 点" className="w-[62px]" /></Field>
          <Field icon="kerning"><Combo label="字距微调" value="" className="w-[71px]" /></Field>
          <Field icon="tracking"><Combo label="字距" value="0" className="w-[62px]" /></Field>
        </div>
        <div className="border-t border-[#b0abb1] pt-[4px] pb-[3px]">
          <Field icon="tsume"><Combo label="比例间距" value="0%" className="w-[63px]" /></Field>
        </div>
        <div className="grid grid-cols-[99px_auto] justify-start gap-y-[2px] border-y border-[#b0abb1] pt-[4px] pb-[3px]">
          <Field icon="vScale"><TextBox label="垂直缩放" value="100%" /></Field>
          <Field icon="hScale" className="ml-auto"><TextBox label="水平缩放" value="100%" /></Field>
          <Field icon="baseline"><TextBox label="基线偏移" value="0 点" /></Field>
          <div className="flex items-center whitespace-nowrap">
            颜色：
            <button type="button" aria-label="颜色" className="h-[15px] w-[42px] shrink-0 border border-[#77727a] bg-black" />
          </div>
        </div>
      </div>
    </section>
  )
}

function Watermark() {
  return (
    <div className="pointer-events-none absolute right-0 bottom-0 flex h-[35px] w-[234px] overflow-hidden text-white opacity-60">
      <span className="mt-[22px] font-['Liberation_Sans'] text-[38px] leading-[44px] font-bold">Bai</span>
      <svg viewBox="0 0 64 35" className="h-[35px] w-[64px] shrink-0" fill="#fff" stroke="#aaa5ab" strokeWidth=".8" aria-hidden="true">
        <ellipse cx="22" cy="12" rx="7" ry="9" />
        <ellipse cx="36" cy="13" rx="7" ry="9" />
        <ellipse cx="9" cy="25" rx="7" ry="9" />
        <ellipse cx="48" cy="29" rx="7" ry="9" />
        <ellipse cx="29" cy="40" rx="14" ry="13" />
      </svg>
      <span className="mt-[25px] text-[36px] leading-[44px] font-bold">经验</span>
    </div>
  )
}

export default function App() {
  return (
    <div className="relative flex h-screen flex-col overflow-hidden bg-[#dad5da] font-['Open_Sans','Noto_Sans_CJK_SC',sans-serif] text-[#2d292e]">
      <MenuBar />
      <OptionsBar />
      <div className="flex min-h-0 flex-1 pr-[3px]">
        <Toolbar />
        <Workspace />
        <div className="flex w-[228px] shrink-0 flex-col border-r border-l-2 border-[#77727a]">
          <div className="flex h-[9px] shrink-0 items-center justify-between bg-[#99949b] pr-[3px] pl-[21px]">
            <DoubleArrow left />
            <DoubleArrow />
          </div>
          <div className="flex min-h-0 flex-1">
            <aside className="w-[31px] shrink-0 border-t border-r-2 border-[#77727a]">
              <div className="flex flex-col items-center gap-[7px] border-b border-[#9a959b] pt-[3px] pb-[4px] text-[#4a464b]">
                <Grip />
                <IconButton name="brushes" />
                <IconButton name="brushPresets" />
              </div>
            </aside>
            <div className="flex min-w-0 flex-1 flex-col">
              <AdjustmentsPanel />
              <LayersPanel />
              <div className="border-t-2 border-[#77727a]">
                <TabBar tabs={['历史记录', '动作']} active="动作" />
              </div>
              <div className="border-t-2 border-[#77727a]">
                <TabBar tabs={['属性']} active="属性" />
              </div>
              <CharacterPanel />
            </div>
          </div>
        </div>
      </div>
      <Watermark />
    </div>
  )
}
